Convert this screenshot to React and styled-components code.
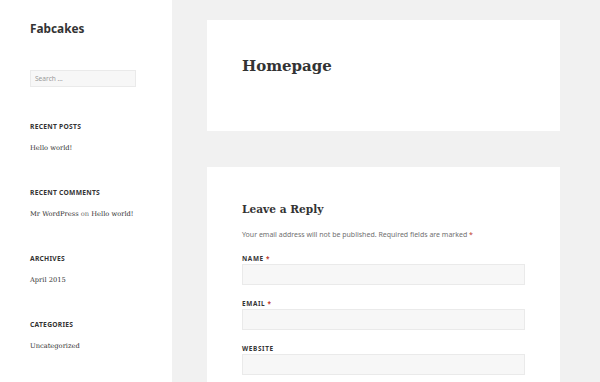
import styled, { createGlobalStyle } from "styled-components";

const Global = createGlobalStyle`
  html, body {
    margin: 0;
    padding: 0;
    background: #f1f1f1;
  }
  * { box-sizing: border-box; }
`;

const sans = `"Noto Sans", "Open Sans", sans-serif`;
const serif = `"DejaVu Serif", "Liberation Serif", serif`;

const Page = styled.div`
  display: flex;
  min-height: 382px;
  height: 382px;
  overflow: hidden;
`;

const Sidebar = styled.aside`
  width: 172px;
  flex-shrink: 0;
  background: #fff;
  padding: 19px 0 0 30px;
`;

const SiteTitle = styled.h1`
  margin: 0 0 33px;
  font-family: ${sans};
  font-weight: 700;
  font-size: 11.8px;
  line-height: 18px;
  color: #333;
`;

const Search = styled.input`
  display: block;
  width: 106px;
  height: 17px;
  margin: 0 0 35px;
  padding: 0 4px;
  background: #f7f7f7;
  border: 1px solid #eaeaea;
  font-family: ${sans};
  font-size: 6.6px;
  color: #999;
  outline: none;
  &::placeholder { color: #9a9a9a; }
`;

const Widget = styled.section`
  margin-bottom: 34px;
`;

const WidgetTitle = styled.h2`
  margin: 0 0 11px;
  font-family: ${sans};
  font-weight: 700;
  font-size: 6.7px;
  letter-spacing: 0.04em;
  line-height: 9px;
  text-transform: uppercase;
  color: #333;
`;

const WidgetLine = styled.div`
  font-family: ${serif};
  font-size: 6.7px;
  line-height: 12px;
  color: #333;
`;

const Muted = styled.span`
  color: #707070;
`;

const Main = styled.main`
  flex: 1;
  display: flex;
  flex-direction: column;
  gap: 36px;
  padding: 20px 40px 0 35px;
`;

const Card = styled.article`
  background: #fff;
  padding: ${(p) => p.$pad};
  min-height: ${(p) => p.$min || "auto"};
`;

const EntryTitle = styled.h1`
  margin: 0;
  font-family: ${serif};
  font-weight: 700;
  font-size: 15px;
  line-height: 22px;
  color: #333;
`;

const ReplyTitle = styled.h3`
  margin: 0 0 11px;
  font-family: ${serif};
  font-weight: 700;
  font-size: 10.6px;
  line-height: 18px;
  color: #333;
`;

const Notes = styled.p`
  margin: 0 0 13px;
  font-family: ${sans};
  font-size: 7px;
  line-height: 12px;
  color: #707070;
`;

const Req = styled.span`
  color: #c0392b;
`;

const Field = styled.div`
  margin-bottom: 14px;
`;

const Label = styled.label`
  display: block;
  font-family: ${sans};
  font-weight: 700;
  font-size: 6.4px;
  letter-spacing: 0.1em;
  line-height: 10px;
  text-transform: uppercase;
  color: #333;
`;

const Input = styled.input`
  display: block;
  width: 283px;
  height: 21px;
  background: #f7f7f7;
  border: 1px solid #eaeaea;
  outline: none;
`;

const widgets = [
  { title: "Recent Posts", body: <>Hello world!</> },
  { title: "Recent Comments", body: <>Mr WordPress <Muted>on</Muted> Hello world!</> },
  { title: "Archives", body: <>April 2015</> },
  { title: "Categories", body: <>Uncategorized</> },
];

const fields = [
  { label: "Name", req: true },
  { label: "Email", req: true },
  { label: "Website", req: false },
];

export default function App() {
  return (
    <>
      <Global />
      <Page>
        <Sidebar>
          <SiteTitle>Fabcakes</SiteTitle>
          <Search placeholder="Search …" />
          {widgets.map((w) => (
            <Widget key={w.title}>
              <WidgetTitle>{w.title}</WidgetTitle>
              <WidgetLine>{w.body}</WidgetLine>
            </Widget>
          ))}
        </Sidebar>
        <Main>
          <Card $pad="35px 35px 54px">
            <EntryTitle>Homepage</EntryTitle>
          </Card>
          <Card $pad="33px 35px 20px" $min="260px">
            <ReplyTitle>Leave a Reply</ReplyTitle>
            <Notes>
              Your email address will not be published. Required fields are marked <Req>*</Req>
            </Notes>
            {fields.map((f) => (
              <Field key={f.label}>
                <Label>
                  {f.label} {f.req && <Req>*</Req>}
                </Label>
                <Input type="text" />
              </Field>
            ))}
          </Card>
        </Main>
      </Page>
    </>
  );
}
